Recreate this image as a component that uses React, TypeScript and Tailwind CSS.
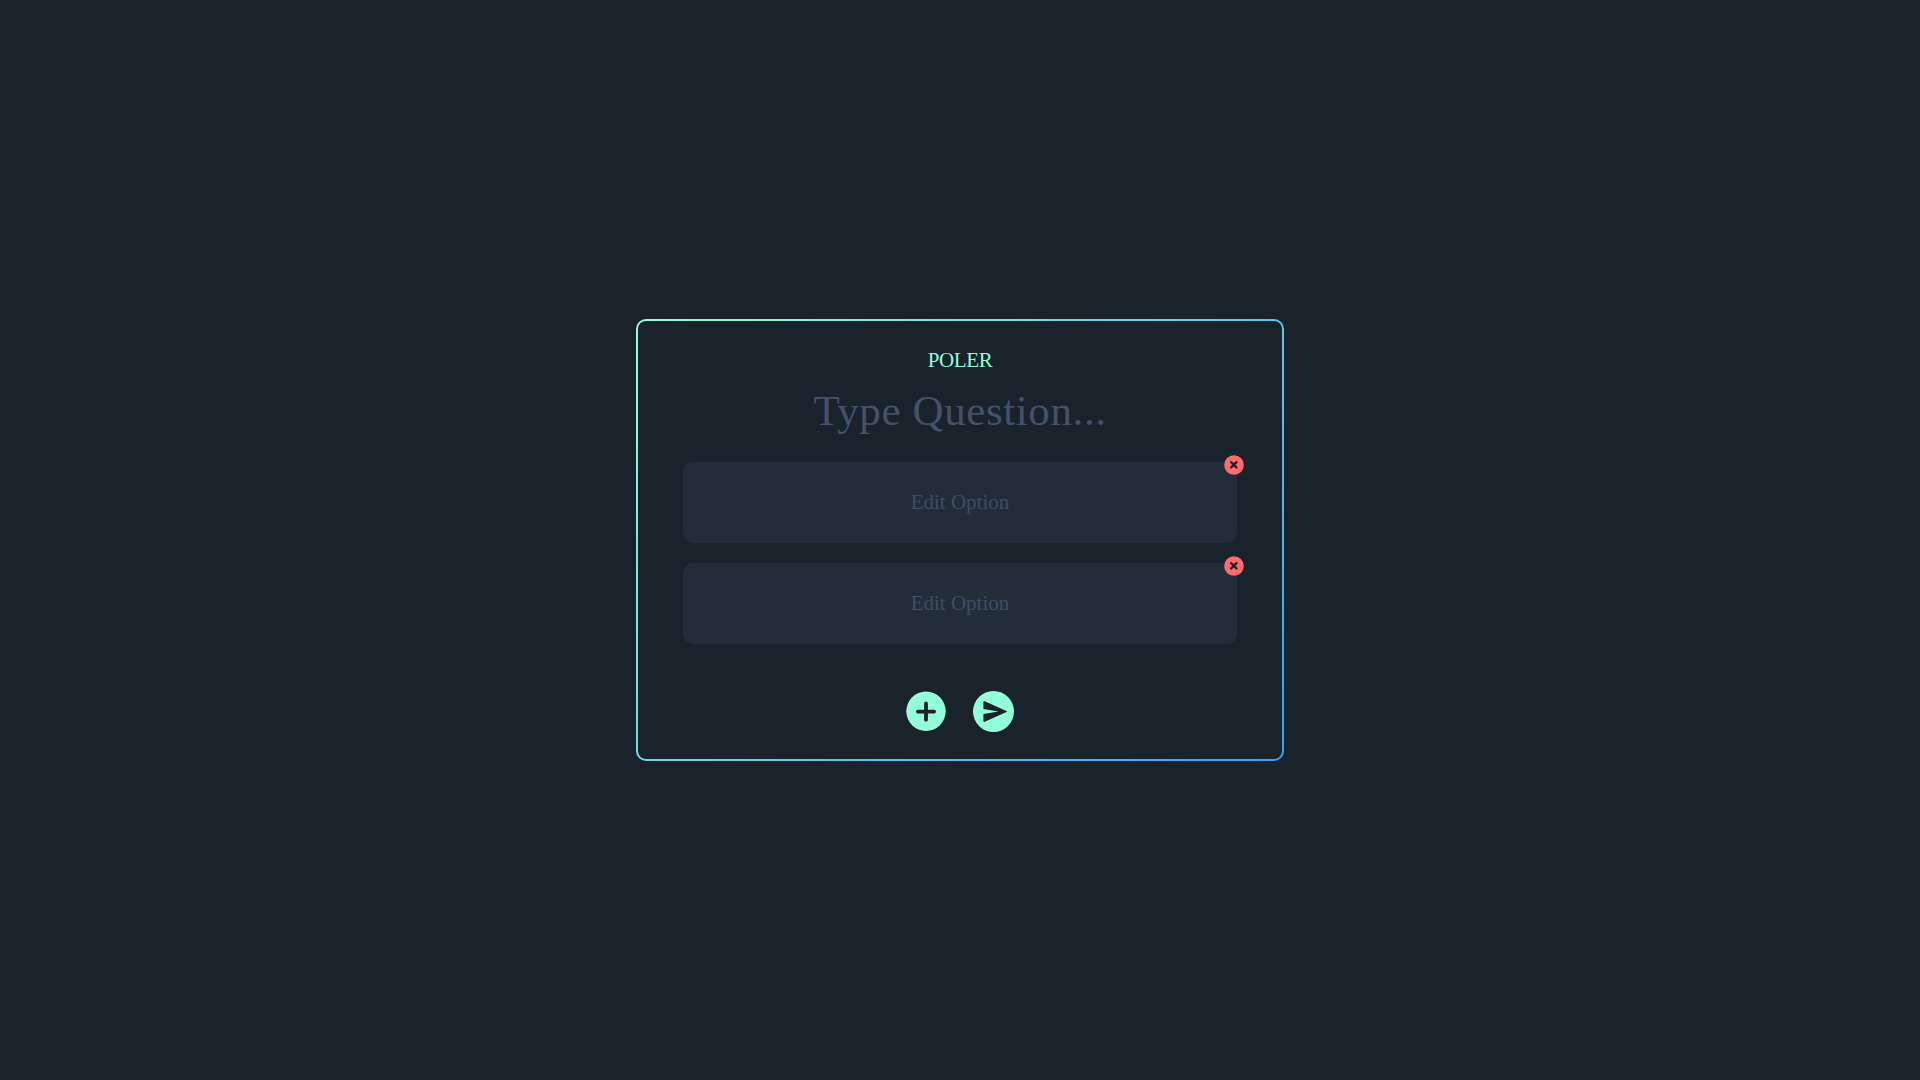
import { useState } from "react";

const INITIAL_OPTIONS = ["", ""];

function CloseIcon() {
  return (
    <svg viewBox="0 0 20 20" className="block size-5">
      <circle cx="10" cy="10" r="9.8" fill="#ff6b6b" />
      <path d="M7.1 7.1l5.4 5.4M12.5 7.1l-5.4 5.4" stroke="#1b222b" strokeWidth="2.3" strokeLinecap="round" />
    </svg>
  );
}

function AddIcon() {
  return (
    <svg viewBox="0 0 40 40" className="block size-10">
      <circle cx="20" cy="20.3" r="19.7" fill="#93ffd8" />
      <path d="M20 12.5v16.2M11.9 20.6h16.2" stroke="#1b222b" strokeWidth="3.8" strokeLinecap="round" />
    </svg>
  );
}

function SendIcon() {
  return (
    <svg viewBox="0 0 41 41" className="block size-[41px]">
      <circle cx="20.5" cy="20.5" r="20.5" fill="#93ffd8" />
      <path
        d="M10.4 11.2q0-1.3 1.3-.9l21.8 9.6q1 .6 0 1.2l-21.8 9.7q-1.3.4-1.3-.9v-6.9l15-2.5-15-2.5z"
        fill="#1b222b"
      />
    </svg>
  );
}

interface OptionProps {
  value: string;
  onChange: (v: string) => void;
  onRemove: () => void;
}

function Option({ value, onChange, onRemove }: OptionProps) {
  return (
    <div className="relative h-[81px] w-full">
      <input
        value={value}
        onChange={(e) => onChange(e.target.value)}
        placeholder="Edit Option"
        className="h-full w-full rounded-[10px] bg-[#232d39] text-center text-[21px] text-[#93ffd8] outline-none placeholder:text-[#3e4d64]"
      />
      <button onClick={onRemove} aria-label="Remove option" className="absolute -top-[7px] -right-[7px] cursor-pointer">
        <CloseIcon />
      </button>
    </div>
  );
}

export default function App() {
  const [question, setQuestion] = useState("");
  const [options, setOptions] = useState(INITIAL_OPTIONS);

  return (
    <div className="flex min-h-screen items-center justify-center bg-[#1a222b] font-['Liberation_Serif',serif]">
      <div className="rounded-[10px] bg-linear-[135deg,#93ffd8,#3a9ff0] p-0.5">
        <div className="flex h-[438px] w-[644px] flex-col items-center rounded-lg bg-[#1a222b] px-[45px]">
          <h1 className="mt-[27px] h-6 text-[21px] leading-6 tracking-[-0.4px] text-[#93ffd8]">POLER</h1>
          <input
            value={question}
            onChange={(e) => setQuestion(e.target.value)}
            placeholder="Type Question..."
            className="mt-3.5 h-[50px] w-full text-center text-[43px] tracking-[0.6px] text-[#93ffd8] outline-none placeholder:text-[#435269]"
          />
          <div className="mt-[26px] flex w-full flex-col gap-5">
            {options.map((option, i) => (
              <Option
                key={i}
                value={option}
                onChange={(v) => setOptions(options.map((o, j) => (j === i ? v : o)))}
                onRemove={() => setOptions(options.filter((_, j) => j !== i))}
              />
            ))}
          </div>
          <div className="mt-[47px] flex gap-[27px]">
            <button onClick={() => setOptions([...options, ""])} aria-label="Add option" className="h-10 cursor-pointer">
              <AddIcon />
            </button>
            <button aria-label="Send poll" className="h-[41px] cursor-pointer">
              <SendIcon />
            </button>
          </div>
        </div>
      </div>
    </div>
  );
}
